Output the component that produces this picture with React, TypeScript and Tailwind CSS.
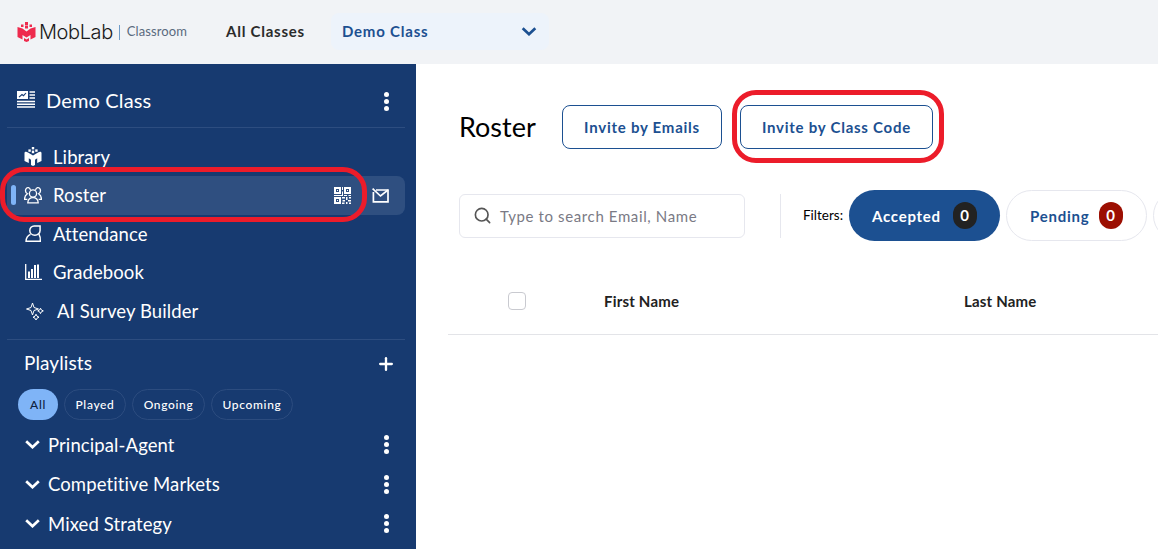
import type { ReactNode } from "react";
import { Plus, Search } from "lucide-react";

function Dots({ className = "" }: { className?: string }) {
    return (
        <div className={`flex flex-col items-center gap-[2px] ${className}`}>
            <span className="w-[5px] h-[5px] rounded-full bg-white" />
            <span className="w-[5px] h-[5px] rounded-full bg-white" />
            <span className="w-[5px] h-[5px] rounded-full bg-white" />
        </div>
    );
}

function Chevron({ color = "white", width = 15 }: { color?: string; width?: number }) {
    return (
        <svg width={width} height="9" viewBox="0 0 15 9" fill="none" stroke={color} strokeWidth="2.7">
            <path d="M1.2 1.2 L7.5 7.2 L13.8 1.2" />
        </svg>
    );
}

function LogoMark() {
    return (
        <svg width="19" height="20" viewBox="0 0 18 20" fill="#ee2a4d">
            <rect x="7.5" y="0" width="3" height="3" />
            <rect x="3.5" y="2.5" width="2.5" height="2.5" />
            <rect x="12" y="2.5" width="2.5" height="2.5" />
            <rect x="7.5" y="3.5" width="3" height="3" />
            <path d="M0 5 L5 6.5 L9 9.5 L13 6.5 L18 5 V15 L13 17.5 V13 L9 15.5 L5 13 V17.5 L0 15 Z" />
            <path d="M6.5 16 L9 17.5 L11.5 16 V19 L9 20 L6.5 19 Z" />
        </svg>
    );
}

function ClassIcon() {
    return (
        <svg width="18" height="17" viewBox="0 0 18 17" fill="none" stroke="white">
            <rect x="0" y="0" width="11" height="8" fill="white" stroke="none" />
            <path d="M2 6.2 L5 3.5 L6.5 4.7 L9 2" stroke="#173a70" strokeWidth="1.1" />
            <path d="M12.5 1 H18 M12.5 4 H18 M12.5 7 H18 M0 10.5 H18 M0 13.2 H18 M0 16 H18" strokeWidth="1.6" />
        </svg>
    );
}

function LibraryIcon() {
    return (
        <svg width="18" height="19" viewBox="0 0 18 19" fill="white">
            <rect x="7.8" y="0" width="2.4" height="2.4" />
            <rect x="4.4" y="2.4" width="2.4" height="2.4" />
            <rect x="11.2" y="2.4" width="2.4" height="2.4" />
            <rect x="7.8" y="3.6" width="2.4" height="2.6" />
            <path d="M0.5 6 C0.5 4.5 2.5 4.5 4 5.4 L9 8.6 L14 5.4 C15.5 4.5 17.5 4.5 17.5 6 V14 L13.2 16 V11.2 L11 12.8 V18 L9 19 L7 18 V12.8 L4.8 11.2 V16 L0.5 14 Z" />
        </svg>
    );
}

function RosterIcon() {
    return (
        <svg width="18" height="18" viewBox="0 0 18 18" fill="none" stroke="white" strokeWidth="1.3">
            <circle cx="9" cy="7.5" r="3.6" />
            <path d="M3.8 16.8 C4 13.2 6.5 11.6 9 11.6 C11.5 11.6 14 13.2 14.2 16.8 Z" />
            <path d="M6.4 4 C6 1.4 3 0.8 1.9 3 C1.1 4.8 2 6.8 3.4 7.8 C1.4 9 0.5 11 0.6 13.4 H3.4" />
            <path d="M11.6 4 C12 1.4 15 0.8 16.1 3 C16.9 4.8 16 6.8 14.6 7.8 C16.6 9 17.5 11 17.4 13.4 H14.6" />
        </svg>
    );
}

function AttendanceIcon() {
    return (
        <svg width="17" height="17" viewBox="0 0 16 16" fill="none" stroke="white" strokeWidth="1.4">
            <path d="M8.6 0.9 H14.2 V5.2 C14.2 7.6 12 9.6 9.3 9.6 C6.6 9.6 4.5 7.6 4.5 5.2 C4.5 2.8 6.3 0.9 8.6 0.9 Z" />
            <path d="M5.2 8.8 C2.6 10 1 12 1 15.3 H14.4 C14.7 13 14.5 11 13 8.4" />
        </svg>
    );
}

function GradebookIcon() {
    return (
        <svg width="17" height="16" viewBox="0 0 17 16" fill="none" stroke="white">
            <path d="M0.7 0 V15.3 H17" strokeWidth="1.3" />
            <rect x="3" y="7.5" width="2" height="6.5" fill="white" stroke="none" />
            <rect x="6" y="5" width="2" height="9" fill="white" stroke="none" />
            <rect x="9" y="1" width="2" height="13" fill="white" stroke="none" />
            <rect x="12" y="0.5" width="2" height="13.5" fill="white" stroke="none" />
        </svg>
    );
}

function SparkleIcon() {
    return (
        <svg width="18" height="18" viewBox="0 0 18 18" fill="none" stroke="white" strokeWidth="1">
            <path d="M6.5 1 L8 5.5 L12.5 7 L8 8.5 L6.5 13 L5 8.5 L0.5 7 L5 5.5 Z" />
            <path d="M14.5 6.2 L15.4 8 L17.3 8.9 L15.4 9.8 L14.5 11.6 L13.6 9.8 L11.7 8.9 L13.6 8 Z" />
            <path d="M10 12.2 L11 14.2 L13 15.2 L11 16.2 L10 18 L9 16.2 L7 15.2 L9 14.2 Z" />
        </svg>
    );
}

function QrIcon() {
    return (
        <svg width="17" height="17" viewBox="0 0 17 17" fill="white">
            <path fillRule="evenodd" d="M0 0 H7 V7 H0 Z M2 2 V5 H5 V2 Z M10 0 H17 V7 H10 Z M12 2 V5 H15 V2 Z M0 10 H7 V17 H0 Z M2 12 V15 H5 V12 Z" />
            <rect x="3" y="3" width="1" height="1" />
            <rect x="13" y="3" width="1" height="1" />
            <rect x="3" y="13" width="1" height="1" />
            <path d="M8 0 H9 V3 H8 Z M8 4.5 H9 V9 H0 V8 H8 Z M10 8 H13 V9 H10 Z M14.5 8 H17 V9 H14.5 Z M8 10 H11 V11.5 H8 Z M12 10 H13.5 V13 H12 Z M15 10 H17 V11.5 H15 Z M8.5 13 H11 V14.5 H8.5 Z M14 13 H17 V14.5 H14 Z M8 15.5 H10.5 V17 H8 Z M12 15 H13.5 V17 H12 Z M15 15.5 H17 V17 H15 Z" />
        </svg>
    );
}

function MailIcon() {
    return (
        <svg width="17" height="15" viewBox="0 0 17 15" fill="none" stroke="white" strokeWidth="1.7">
            <path d="M4 2 H16 V13.9 H1.4 V4" />
            <path d="M0.6 0.6 L8.5 8 L16 2" />
        </svg>
    );
}

function NavRow({ icon, label, gap = "gap-[11px]", indent = "pl-[17px]", labelClass = "pt-[2px]" }: { icon: ReactNode; label: string; gap?: string; indent?: string; labelClass?: string }) {
    return (
        <div className={`h-[38.5px] flex items-center ${indent} ${gap} text-[18.5px] tracking-[0.1px] text-white`}>
            <span className="w-[18px] flex justify-center">{icon}</span>
            <span className={labelClass}>{label}</span>
        </div>
    );
}

function PlaylistRow({ label }: { label: string }) {
    return (
        <div className="h-[39.5px] flex items-center justify-between pl-[25px] pr-[27px] text-[18.5px] tracking-[0.1px] text-white">
            <div className="flex items-center gap-[8px]">
                <Chevron />
                <span className="pt-[2px]">{label}</span>
            </div>
            <Dots />
        </div>
    );
}

function Chip({ label, width, active }: { label: string; width: string; active?: boolean }) {
    return (
        <div
            className={`h-[31px] flex items-center justify-center rounded-full text-[12px] font-medium tracking-[0.65px] ${width} ${
                active ? "bg-[#7fb4f7] text-[#10233f]" : "border border-[#2c4c7f] text-white"
            }`}
        >
            {label}
        </div>
    );
}

function FilterPill({ label, count, width, active, badge }: { label: string; count: number; width: string; active?: boolean; badge: string }) {
    return (
        <div
            className={`h-[51px] shrink-0 flex items-center justify-between rounded-full px-[23px] text-[15px] font-bold tracking-[0.75px] ${width} ${
                active ? "bg-[#1c5091] text-white" : "border border-[#e6e7ee] text-[#1c5091]"
            }`}
        >
            <span className="pt-[1px]">{label}</span>
            <span className={`w-[24px] h-[27px] flex items-center justify-center rounded-full text-white ${badge}`}>{count}</span>
        </div>
    );
}

export default function App() {
    return (
        <div className="relative w-[1158px] h-[549px] overflow-hidden bg-white font-['Lato',sans-serif]">
            <header className="h-[64px] bg-[#f1f3f6] flex items-center pl-[17px]">
                <LogoMark />
                <span className="ml-[3px] text-[20px] leading-none text-[#1a1a1a] font-['Inter',sans-serif] font-light tracking-[-0.4px]">MobLab</span>
                <span className="ml-[6px] w-px h-[15px] bg-[#6f9cc9]" />
                <span className="ml-[7px] text-[13px] tracking-[0.1px] text-[#5a6a7e]">Classroom</span>
                <span className="ml-[39px] -mt-[2px] text-[15px] font-bold tracking-[0.75px] text-[#2b2b2b]">All Classes</span>
                <div className="ml-[26px] -mt-[2px] w-[218px] h-[37px] flex items-center justify-between pl-[11px] pr-[12px] rounded-lg bg-[#edf3fb]">
                    <span className="text-[15px] font-bold tracking-[0.8px] text-[#1c5091]">Demo Class</span>
                    <Chevron color="#1c5091" width={16} />
                </div>
            </header>

            <div className="flex h-[485px]">
                <aside className="w-[416px] shrink-0 bg-[#173a70] overflow-hidden">
                    <div className="h-[64px] ml-[7px] mr-[11px] border-b border-[#2d4d80] flex items-center justify-between pl-[10px] pr-[16px] pt-[8px]">
                        <div className="flex items-center gap-[11px] text-[20px] tracking-[0.15px] text-white">
                            <ClassIcon />
                            <span>Demo Class</span>
                        </div>
                        <Dots className="mt-[3px]" />
                    </div>

                    <div className="ml-[7px] mr-[11px] pt-[9px] pb-[9px] border-b border-[#2d4d80]">
                        <NavRow icon={<LibraryIcon />} label="Library" labelClass="pt-[3px]" />
                        <div className="relative h-[39px] flex items-center justify-between rounded-lg bg-[#2f4f80] pl-[17px] pr-[16px] text-[18.5px] tracking-[0.1px] text-white">
                            <span className="absolute left-[4px] top-[9px] w-[5px] h-[20px] rounded-full bg-[#7fb4f7]" />
                            <div className="flex items-center gap-[11px]">
                                <RosterIcon />
                                <span className="pt-[2px]">Roster</span>
                            </div>
                            <div className="flex items-center gap-[21px]">
                                <QrIcon />
                                <MailIcon />
                            </div>
                        </div>
                        <NavRow icon={<AttendanceIcon />} label="Attendance" />
                        <NavRow icon={<GradebookIcon />} label="Gradebook" />
                        <NavRow icon={<SparkleIcon />} label="AI Survey Builder" gap="gap-[13px]" indent="pl-[19px]" />
                    </div>

                    <div className="h-[49px] flex items-center justify-between pl-[24px] pr-[20px] pb-[2px] text-[19px] tracking-[0.1px] text-white">
                        <span>Playlists</span>
                        <Plus size={20} strokeWidth={2.8} />
                    </div>
                    <div className="flex items-center gap-[6px] pl-[18px]">
                        <Chip label="All" width="w-[40px]" active />
                        <Chip label="Played" width="w-[62px]" />
                        <Chip label="Ongoing" width="w-[73px]" />
                        <Chip label="Upcoming" width="w-[82px]" />
                    </div>
                    <div className="pt-[5px]">
                        <PlaylistRow label="Principal-Agent" />
                        <PlaylistRow label="Competitive Markets" />
                        <PlaylistRow label="Mixed Strategy" />
                    </div>
                </aside>

                <main className="flex-1 min-w-0 overflow-hidden pl-[32px]">
                    <div className="flex items-center pl-[11px] pt-[41px]">
                        <h1 className="w-[103px] shrink-0 text-[27px] font-normal text-black">Roster</h1>
                        <div className="flex items-center gap-[18px]">
                            <button className="h-[44px] w-[160px] rounded-lg border border-[#1c5091] text-[15px] font-bold tracking-[0.75px] text-[#1c5091]">Invite by Emails</button>
                            <button className="h-[44px] w-[193px] rounded-lg border border-[#1c5091] text-[15px] font-bold tracking-[0.75px] text-[#1c5091]">Invite by Class Code</button>
                        </div>
                    </div>

                    <div className="flex items-center pl-[11px] pt-[41px]">
                        <div className="w-[286px] h-[44px] shrink-0 flex items-center gap-[8px] pl-[13px] rounded-md border border-[#e6e7ee]">
                            <Search size={19} strokeWidth={2.1} className="text-[#555]" />
                            <span className="pt-[2px] text-[15px] tracking-[0.62px] text-[#7a7a85]">Type to search Email, Name</span>
                        </div>
                        <span className="ml-[35px] w-px h-[44px] shrink-0 bg-[#e6e7ee]" />
                        <span className="ml-[22px] w-[46px] shrink-0 text-[13.5px] text-black">Filters:</span>
                        <div className="flex items-center gap-[6px]">
                            <FilterPill label="Accepted" count={0} width="w-[151px]" active badge="bg-[#222222]" />
                            <FilterPill label="Pending" count={0} width="w-[141px]" badge="bg-[#9c0f02]" />
                            <span className="h-[51px] w-[120px] shrink-0 rounded-full border border-[#e6e7ee]" />
                        </div>
                    </div>

                    <div className="h-[94px] pt-[28px] flex items-center border-b border-[#e3e4e8] text-[15px] font-bold tracking-[0.2px] text-[#222]">
                        <span className="ml-[60px] -mt-[2px] w-[18px] h-[18px] rounded border border-[#c9cad0]" />
                        <span className="ml-[78px] w-[360px]">First Name</span>
                        <span>Last Name</span>
                    </div>
                </main>
            </div>

            <div className="absolute left-0 top-[167px] w-[367px] h-[55px] rounded-[24px] border-[5px] border-[#ec1c2a]" />
            <div className="absolute left-[732px] top-[90px] w-[212px] h-[73px] rounded-[24px] border-[5px] border-[#ec1c2a]" />
        </div>
    );
}
